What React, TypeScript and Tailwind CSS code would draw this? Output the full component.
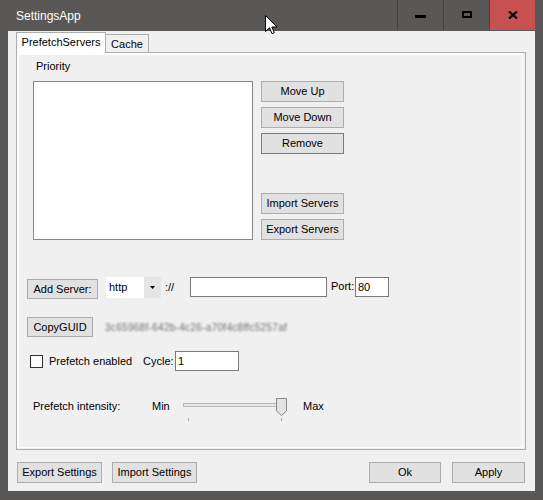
import React from 'react'

function Btn({
  children,
  className = '',
  focused = false,
}: {
  children: React.ReactNode
  className?: string
  focused?: boolean
}) {
  return (
    <button
      type="button"
      className={`flex items-center justify-center bg-[#e1e1e1] border leading-[13px] ${
        focused ? 'border-[#3d8bd3]' : 'border-[#adadad]'
      } ${className}`}
    >
      {children}
    </button>
  )
}

function TitleButtons() {
  return (
    <div className="flex h-[30px]">
      <div className="w-[46px] h-full border-l border-[#444342] flex items-center justify-center">
        <div className="w-[11px] h-[3px] bg-black mt-[3px]" />
      </div>
      <div className="w-[46px] h-full border-l border-[#444342] flex items-center justify-center">
        <div className="w-[10px] h-[7px] border-2 border-black -mt-[1px]" />
      </div>
      <div className="w-[46px] h-full border-l border-[#444342] bg-[#c75050] flex items-center justify-center">
        <svg width="10" height="8" viewBox="0 0 10 8" className="-mt-[1px]">
          <path d="M1 0.5 L9 7.5 M9 0.5 L1 7.5" stroke="#000" strokeWidth="2.2" />
        </svg>
      </div>
    </div>
  )
}

function Slider() {
  return (
    <div className="relative w-[104px] h-[24px]">
      <div className="absolute left-0 top-[5px] w-[100px] h-[4px] border border-[#b9b9b9] bg-[#e7eaea]" />
      <svg
        className="absolute left-[93px] top-0"
        width="11"
        height="18"
        viewBox="0 0 11 18"
      >
        <path d="M0.5 0.5 H10.5 V13 L5.5 17.5 L0.5 13 Z" fill="#e3e3e3" stroke="#8a8a8a" />
      </svg>
      <div className="absolute left-[5px] top-[20px] w-px h-[3px] bg-[#a9a9a9]" />
      <div className="absolute left-[98px] top-[20px] w-px h-[3px] bg-[#a9a9a9]" />
    </div>
  )
}

export default function App() {
  return (
    <div className="relative w-[543px] h-[500px] bg-[#595856] flex flex-col px-2 pb-[9px] font-['Liberation_Sans',Arial,sans-serif] text-[11px] text-black">
      {/* title bar */}
      <div className="h-[31px] flex items-start">
        <div className="pl-2 pt-[8px] text-[12px] leading-[16px] text-white">SettingsApp</div>
        <div className="flex-1" />
        <TitleButtons />
      </div>

      {/* client area */}
      <div className="flex-1 bg-[#f0f0f0] flex flex-col">
        <div className="relative z-10 flex items-end ml-2 mt-[1px] h-[21px] -mb-px">
          <div className="h-[21px] w-[90px] bg-white border border-b-0 border-[#adadad] flex justify-center pt-[3px] leading-[13px]">
            PrefetchServers
          </div>
          <div className="h-[18px] mb-px w-[43px] bg-[#f0f0f0] border border-l-0 border-b-0 border-[#adadad] flex justify-center pt-[3px] leading-[13px]">
            Cache
          </div>
        </div>

        <div className="ml-2 w-[510px] h-[398px] border border-[#adadad] pr-[2px] pb-px">
          <div className="h-full border-l-2 border-t-2 border-r border-b border-white flex flex-col">
            <div className="mt-[5px] ml-[17px] h-[13px] leading-[13px]">Priority</div>

            <div className="mt-[8px] ml-[14px] flex h-[159px]">
              <div className="w-[220px] h-full bg-white border border-[#828790]" />
              <div className="ml-2 w-[83px] flex flex-col justify-between">
                <div className="flex flex-col gap-[5px]">
                  <Btn className="h-[21px]">Move Up</Btn>
                  <Btn className="h-[21px]">Move Down</Btn>
                  <Btn className="h-[21px]" focused>
                    Remove
                  </Btn>
                </div>
                <div className="flex flex-col gap-[5px]">
                  <Btn className="h-[21px]">Import Servers</Btn>
                  <Btn className="h-[21px]">Export Servers</Btn>
                </div>
              </div>
            </div>

            <div className="mt-[37px] ml-2 flex items-start h-[22px]">
              <Btn className="mt-[2px] h-[20px] w-[71px]">Add Server:</Btn>
              <div className="ml-2 w-[55px] h-[21px] flex">
                <div className="flex-1 bg-white flex items-center pl-[3px]">http</div>
                <div className="w-[17px] bg-[#e5e5e5] flex items-center justify-center">
                  <svg width="5" height="3" viewBox="0 0 5 3">
                    <path d="M0 0 H5 L2.5 3 Z" fill="#000" />
                  </svg>
                </div>
              </div>
              <div className="ml-1 w-[25px] h-[21px] flex items-center">://</div>
              <div className="w-[137px] h-[20px] bg-white border border-[#7a7a7a]" />
              <div className="ml-1 w-[24px] h-[19px] flex items-center">Port:</div>
              <div className="w-[34px] h-[20px] bg-white border border-[#7a7a7a] flex items-center pl-[2px]">
                80
              </div>
            </div>

            <div className="mt-[18px] ml-2 flex items-center h-[20px]">
              <Btn className="h-[20px] w-[66px]">CopyGUID</Btn>
              <div className="ml-3 text-[10px] tracking-[0.3px] text-[#6e6e6e] blur-[1px]">
                3c65968f-642b-4c26-a70f4c8ffc5257af
              </div>
            </div>

            <div className="mt-[14px] ml-[11px] flex items-center h-[20px]">
              <div className="w-[13px] h-[13px] bg-white border border-[#333333]" />
              <div className="ml-[6px] w-[94px]">Prefetch enabled</div>
              <div className="w-[32px]">Cycle:</div>
              <div className="w-[64px] h-[20px] bg-white border border-[#7a7a7a] flex items-center pl-[2px]">
                1
              </div>
            </div>

            <div className="mt-[27px] ml-[14px] flex items-start h-[24px]">
              <div className="w-[119px] h-[16px] leading-[16px]">Prefetch intensity:</div>
              <div className="w-[31px] h-[16px] leading-[16px]">Min</div>
              <Slider />
              <div className="ml-4 h-[16px] leading-[16px]">Max</div>
            </div>
          </div>
        </div>

        <div className="mt-[12px] h-[21px] flex pl-[9px] pr-[10px]">
          <Btn className="h-full w-[85px]">Export Settings</Btn>
          <Btn className="h-full w-[85px] ml-[10px]">Import Settings</Btn>
          <div className="flex-1" />
          <Btn className="h-full w-[72px]">Ok</Btn>
          <Btn className="h-full w-[73px] ml-[11px]">Apply</Btn>
        </div>
      </div>

      {/* mouse pointer */}
      <svg
        className="absolute left-[265px] top-[15px]"
        width="13"
        height="20"
        viewBox="0 0 13 20"
      >
        <path
          d="M0.5 0.5 L0.5 16.5 L4.5 12.8 L7 18.7 L9.3 17.7 L6.9 12 L12 12 Z"
          fill="#fff"
          stroke="#000"
          strokeWidth="1"
          strokeLinejoin="miter"
        />
      </svg>
    </div>
  )
}
